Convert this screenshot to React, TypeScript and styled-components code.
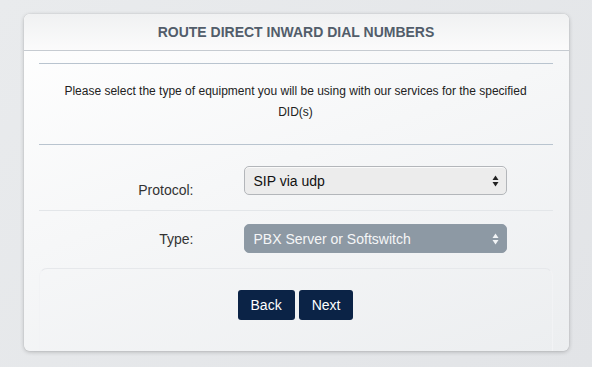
import React, { useState } from 'react';
import styled, { createGlobalStyle } from 'styled-components';

const GlobalStyle = createGlobalStyle`
  html, body {
    margin: 0;
    padding: 0;
  }
  body {
    min-height: 367px;
    background: linear-gradient(135deg, #e9ebed 0%, #e2e4e7 100%);
    font-family: "Liberation Sans", Arial, Helvetica, sans-serif;
  }
`;

const Page = styled.div`
  padding-top: 14px;
  padding-bottom: 15px;
`;

const Card = styled.div`
  width: 545px;
  margin: 0 auto;
  border-radius: 6px;
  background: linear-gradient(160deg, #ffffff 0%, #f6f7f8 45%, #eceef0 100%);
  box-shadow: 0 1px 4px rgba(0, 0, 0, 0.22), 0 0 1px rgba(0, 0, 0, 0.2);
  overflow: hidden;
`;

const Header = styled.div`
  height: 36px;
  display: flex;
  align-items: center;
  justify-content: center;
  background: linear-gradient(180deg, #f0f1f2 0%, #fbfbfb 100%);
  border-bottom: 1px solid #c6cbd1;
`;

const Title = styled.h1`
  margin: 0;
  font-size: 14px;
  font-weight: bold;
  color: #525d6a;
`;

const Body = styled.div`
  padding: 12px 16px 0 15px;
`;

const Rule = styled.hr`
  margin: 0;
  border: 0;
  height: 1px;
  background: #b9c4cf;
`;

const Intro = styled.p`
  margin: 17px 0 21px;
  padding: 0 20px;
  text-align: center;
  font-size: 12px;
  line-height: 21px;
  color: #222;
`;

const Row = styled.div<{ $top: number; $bottom: number; $line?: boolean }>`
  display: flex;
  align-items: flex-start;
  padding-top: ${(p) => p.$top}px;
  padding-bottom: ${(p) => p.$bottom}px;
  border-bottom: ${(p) => (p.$line ? '1px solid #e3e6e9' : 'none')};
`;

const Label = styled.label<{ $offset: number }>`
  width: 155px;
  margin-top: ${(p) => p.$offset}px;
  text-align: right;
  font-size: 14px;
  line-height: 20px;
  color: #333;
`;

const SelectWrap = styled.div`
  position: relative;
  margin-left: 50px;
  width: 263px;
  height: 29px;
`;

const Select = styled.select<{ $muted?: boolean }>`
  appearance: none;
  -webkit-appearance: none;
  box-sizing: border-box;
  width: 100%;
  height: 29px;
  margin: 0;
  padding: 0 24px 0 9px;
  border-radius: 5px;
  font-family: "Liberation Sans", Arial, sans-serif;
  font-size: 14px;
  outline: none;
  border: 1px solid ${(p) => (p.$muted ? '#8e9aa5' : '#b3b6ba')};
  background: ${(p) => (p.$muted ? '#8d99a4' : '#ececec')};
  color: ${(p) => (p.$muted ? '#f5f6f7' : '#111')};
  box-shadow: ${(p) => (p.$muted ? 'none' : 'inset 0 1px 0 #fafafa')};
`;

const Arrows = styled.svg`
  position: absolute;
  right: 8px;
  top: 9px;
  pointer-events: none;
`;

const Footer = styled.div`
  padding: 21px 0 31px;
  display: flex;
  justify-content: center;
  gap: 4px;
  border-top: 1px solid #e6e8eb;
  border-left: 1px solid #f2f3f5;
  border-right: 1px solid #f2f3f5;
  border-radius: 8px 8px 0 0;
`;

const Button = styled.button`
  height: 30px;
  padding: 0 13px;
  border: 0;
  border-radius: 3px;
  background: #0b2346;
  color: #fff;
  font-family: "Liberation Sans", Arial, sans-serif;
  font-size: 14px;
  cursor: pointer;
`;

const UpDown = ({ color }: { color: string }) => (
  <Arrows width="7" height="12" viewBox="0 0 7 12">
    <path d="M3.5 0.5 L6.5 5 L0.5 5 Z" fill={color} />
    <path d="M3.5 11.5 L6.5 7 L0.5 7 Z" fill={color} />
  </Arrows>
);

const App = () => {
  const [protocol, setProtocol] = useState('sip-udp');
  const [type, setType] = useState('pbx');

  return (
    <>
      <GlobalStyle />
      <Page>
        <Card>
          <Header>
            <Title>ROUTE DIRECT INWARD DIAL NUMBERS</Title>
          </Header>
          <Body>
            <Rule />
            <Intro>
              Please select the type of equipment you will be using with our services for the specified DID(s)
            </Intro>
            <Rule />
            <Row $top={21} $bottom={10} $line>
              <Label $offset={14}>Protocol:</Label>
              <SelectWrap>
                <Select value={protocol} onChange={(e) => setProtocol(e.target.value)}>
                  <option value="sip-udp">SIP via udp</option>
                  <option value="sip-tcp">SIP via tcp</option>
                  <option value="iax2">IAX2</option>
                </Select>
                <UpDown color="#222" />
              </SelectWrap>
            </Row>
            <Row $top={13} $bottom={15}>
              <Label $offset={5}>Type:</Label>
              <SelectWrap>
                <Select $muted value={type} onChange={(e) => setType(e.target.value)}>
                  <option value="pbx">PBX Server or Softswitch</option>
                  <option value="phone">IP Phone</option>
                </Select>
                <UpDown color="#f2f4f6" />
              </SelectWrap>
            </Row>
            <Footer>
              <Button>Back</Button>
              <Button>Next</Button>
            </Footer>
          </Body>
        </Card>
      </Page>
    </>
  );
};

export default App;
